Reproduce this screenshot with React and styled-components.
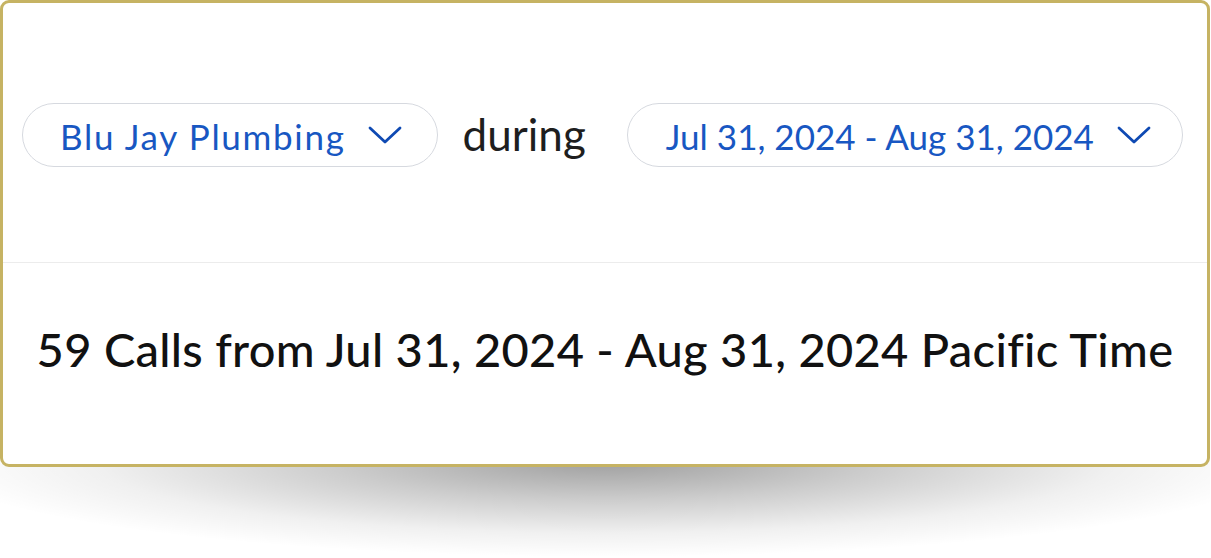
import React from "react";
import styled, { createGlobalStyle } from "styled-components";

const Global = createGlobalStyle`
  html, body { margin: 0; padding: 0; background: #ffffff; }
  body { font-family: "Lato", "Open Sans", sans-serif; }
`;

const Stage = styled.div`
  width: 1211px;
  height: 558px;
  overflow: hidden;
`;

const CardWrap = styled.div`
  position: relative;
  width: 1210px;

  &::before {
    content: "";
    position: absolute;
    left: 0;
    right: 0;
    top: 100%;
    margin-top: -6px;
    height: 96px;
    background: radial-gradient(
      ellipse 56% 100% at 50% 0%,
      rgba(0, 0, 0, 0.38) 0%,
      rgba(0, 0, 0, 0.2) 40%,
      rgba(0, 0, 0, 0.06) 75%,
      rgba(0, 0, 0, 0) 100%
    );
  }
`;

const Card = styled.section`
  position: relative;
  z-index: 1;
  box-sizing: border-box;
  width: 1210px;
  height: 467px;
  border: 3px solid #c6b363;
  border-radius: 9px;
  background: #ffffff;
  display: flex;
  flex-direction: column;
  overflow: hidden;
`;

const FilterRow = styled.div`
  box-sizing: border-box;
  height: 260px;
  flex: none;
  display: flex;
  align-items: center;
  padding: 4px 0 0 19px;
  border-bottom: 1px solid #ececec;
`;

const Pill = styled.button`
  box-sizing: border-box;
  flex: none;
  height: 64px;
  display: flex;
  align-items: center;
  gap: ${(p) => p.$gap}px;
  padding: 3px ${(p) => p.$right}px 0 ${(p) => p.$left}px;
  border: 1.5px solid #d6d9df;
  border-radius: 32px;
  background: #ffffff;
  color: #1857c2;
  font-family: "Lato", "Open Sans", sans-serif;
  font-size: 35px;
  font-weight: 400;
  white-space: nowrap;
  cursor: pointer;
`;

const PillLabel = styled.span`
  letter-spacing: ${(p) => p.$track || 0}px;
  white-space: nowrap;
`;

const ChevronBox = styled.span`
  display: flex;
  margin-top: -2px;
`;

const Connector = styled.span`
  flex: none;
  margin: 0 41px 0 25px;
  font-size: 44px;
  color: #1e1e1e;
  padding-bottom: 2px;
  white-space: nowrap;
`;

const Summary = styled.div`
  flex: 1;
  display: flex;
  align-items: center;
  justify-content: center;
  padding-bottom: 30px;
  font-size: 47px;
  letter-spacing: 0.3px;
  font-weight: 500;
  color: #111111;
  white-space: nowrap;
`;

const Chevron = () => (
  <ChevronBox>
    <svg width="34" height="20" viewBox="0 0 34 20" fill="none">
      <path d="M2 3 L17 17 L32 3" stroke="#0f4ab3" strokeWidth="2.8" strokeLinecap="round" strokeLinejoin="round" />
    </svg>
  </ChevronBox>
);

export default function App() {
  return (
    <Stage>
      <Global />
      <CardWrap>
        <Card>
          <FilterRow>
            <Pill $left={37} $right={35} $gap={22}>
              <PillLabel $track={1.7}>Blu Jay Plumbing</PillLabel>
              <Chevron />
            </Pill>
            <Connector>during</Connector>
            <Pill $left={38} $right={31} $gap={23}>
              <PillLabel>Jul 31, 2024 - Aug 31, 2024</PillLabel>
              <Chevron />
            </Pill>
          </FilterRow>
          <Summary>59 Calls from Jul 31, 2024 - Aug 31, 2024 Pacific Time</Summary>
        </Card>
      </CardWrap>
    </Stage>
  );
}
